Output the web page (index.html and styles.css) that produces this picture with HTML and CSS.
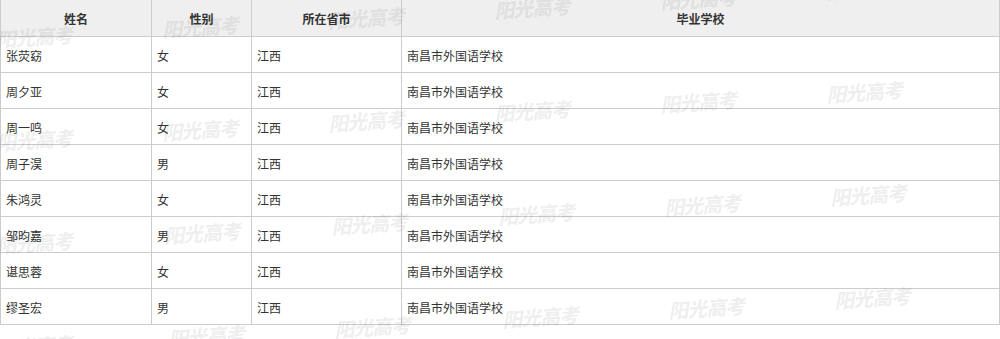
FILE: index.html
```html
<!DOCTYPE html>
<html lang="zh-CN">
<head>
<meta charset="utf-8">
<title>名单</title>
<link rel="stylesheet" href="styles.css">
</head>
<body>
<div class="page">
<table class="list">
  <colgroup>
    <col class="c-name"><col class="c-sex"><col class="c-prov"><col class="c-school">
  </colgroup>
  <thead>
    <tr><th>姓名</th><th>性别</th><th>所在省市</th><th>毕业学校</th></tr>
  </thead>
  <tbody>
    <tr><td>张荧窈</td><td>女</td><td>江西</td><td>南昌市外国语学校</td></tr>
    <tr><td>周夕亚</td><td>女</td><td>江西</td><td>南昌市外国语学校</td></tr>
    <tr><td>周一鸣</td><td>女</td><td>江西</td><td>南昌市外国语学校</td></tr>
    <tr><td>周子淏</td><td>男</td><td>江西</td><td>南昌市外国语学校</td></tr>
    <tr><td>朱鸿灵</td><td>女</td><td>江西</td><td>南昌市外国语学校</td></tr>
    <tr><td>邹昀嘉</td><td>男</td><td>江西</td><td>南昌市外国语学校</td></tr>
    <tr><td>谌思蓉</td><td>女</td><td>江西</td><td>南昌市外国语学校</td></tr>
    <tr><td>缪圣宏</td><td>男</td><td>江西</td><td>南昌市外国语学校</td></tr>
  </tbody>
</table>
<div class="marks" aria-hidden="true">
  <span class="mark" style="left:-4px;top:25px">阳光高考</span>
  <span class="mark" style="left:162px;top:15px">阳光高考</span>
  <span class="mark" style="left:328px;top:6px">阳光高考</span>
  <span class="mark" style="left:494px;top:-4px">阳光高考</span>
  <span class="mark" style="left:660px;top:-13px">阳光高考</span>
  <span class="mark" style="left:826px;top:-23px">阳光高考</span>

  <span class="mark" style="left:-4px;top:128px">阳光高考</span>
  <span class="mark" style="left:162px;top:118px">阳光高考</span>
  <span class="mark" style="left:328px;top:109px">阳光高考</span>
  <span class="mark" style="left:494px;top:99px">阳光高考</span>
  <span class="mark" style="left:660px;top:90px">阳光高考</span>
  <span class="mark" style="left:826px;top:80px">阳光高考</span>

  <span class="mark" style="left:-4px;top:231px">阳光高考</span>
  <span class="mark" style="left:164px;top:221px">阳光高考</span>
  <span class="mark" style="left:331px;top:212px">阳光高考</span>
  <span class="mark" style="left:498px;top:202px">阳光高考</span>
  <span class="mark" style="left:664px;top:193px">阳光高考</span>
  <span class="mark" style="left:830px;top:183px">阳光高考</span>

  <span class="mark" style="left:-4px;top:334px">阳光高考</span>
  <span class="mark" style="left:168px;top:324px">阳光高考</span>
  <span class="mark" style="left:334px;top:315px">阳光高考</span>
  <span class="mark" style="left:502px;top:305px">阳光高考</span>
  <span class="mark" style="left:668px;top:296px">阳光高考</span>
  <span class="mark" style="left:834px;top:286px">阳光高考</span>
</div>
</div>
</body>
</html>
```

FILE: styles.css
```css
html, body {
  margin: 0;
  padding: 0;
  background: #ffffff;
}

.page {
  position: relative;
  width: 1000px;
  height: 339px;
  overflow: hidden;
  font-family: "Noto Sans CJK SC", "Noto Sans", sans-serif;
  font-size: 12px;
  color: #333333;
}

.list {
  border-collapse: collapse;
  table-layout: fixed;
  width: 999px;
}

.c-name { width: 151px; }
.c-sex { width: 100px; }
.c-prov { width: 150px; }
.c-school { width: 598px; }

.list th,
.list td {
  border: 1px solid #cccccc;
  height: 36px;
  padding: 3px 5px 0;
  line-height: 16px;
  box-sizing: border-box;
  white-space: nowrap;
}

.list th {
  background: #efefef;
  font-weight: bold;
  text-align: center;
  color: #333333;
}

.list td {
  text-align: left;
}

.list thead th {
  border-top: 0;
}

.marks {
  position: absolute;
  inset: 0;
  pointer-events: none;
}

.mark {
  position: absolute;
  font-family: "Noto Sans CJK SC", sans-serif;
  font-size: 20px;
  line-height: 24px;
  font-weight: 900;
  font-style: italic;
  letter-spacing: -1px;
  color: rgba(0, 0, 0, 0.07);
  transform: rotate(-4deg);
  white-space: nowrap;
}
```
